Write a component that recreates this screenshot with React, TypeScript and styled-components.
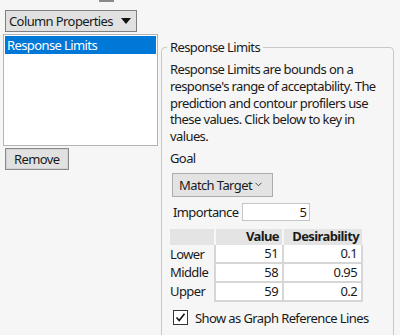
import React from "react";
import styled, { createGlobalStyle } from "styled-components";

const GlobalStyle = createGlobalStyle`
  html, body {
    margin: 0;
    padding: 0;
    background: #f6f6f6;
  }
  body {
    font-family: "Noto Sans", "Open Sans", sans-serif;
    font-size: 13px;
    letter-spacing: -0.6px;
    color: #1a1a1a;
  }
`;

const rows = [
  { label: "Lower", value: "51", desirability: "0.1" },
  { label: "Middle", value: "58", desirability: "0.95" },
  { label: "Upper", value: "59", desirability: "0.2" },
];

function App() {
  return (
    <>
      <GlobalStyle />
      <Page>
        <TopStub />
        <Main>
          <LeftColumn>
            <MenuButton>
              Column Properties
              <Caret />
            </MenuButton>
            <ListBox>
              <ListItem selected>Response Limits</ListItem>
            </ListBox>
            <PlainButton>Remove</PlainButton>
          </LeftColumn>

          <Group>
            <Legend>Response Limits</Legend>
            <Body>
              <Description>
                Response Limits are bounds on a<br />
                response's range of acceptability. The<br />
                prediction and contour profilers use<br />
                these values. Click below to key in<br />
                values.
              </Description>
              <Label>Goal</Label>
              <Select>
                Match Target
                <Chevron viewBox="0 0 8 5">
                  <path d="M0.5 0.5 L4 4 L7.5 0.5" fill="none" stroke="#333" strokeWidth="1" />
                </Chevron>
              </Select>
              <FieldRow>
                <span>Importance</span>
                <NumberBox>5</NumberBox>
              </FieldRow>
              <Table>
                <colgroup>
                  <col style={{ width: 45 }} />
                  <col style={{ width: 68 }} />
                  <col style={{ width: 79 }} />
                </colgroup>
                <thead>
                  <tr>
                    <Th />
                    <Th>Value</Th>
                    <Th>Desirability</Th>
                  </tr>
                </thead>
                <tbody>
                  {rows.map((r) => (
                    <tr key={r.label}>
                      <RowLabel>{r.label}</RowLabel>
                      <Cell>{r.value}</Cell>
                      <Cell>{r.desirability}</Cell>
                    </tr>
                  ))}
                </tbody>
              </Table>
              <CheckRow>
                <CheckBox viewBox="0 0 15 15">
                  <rect x="0.5" y="0.5" width="14" height="14" fill="#fff" stroke="#333" />
                  <path d="M3.5 7.5 L6.2 10.5 L11.5 3.8" fill="none" stroke="#111" strokeWidth="1.6" />
                </CheckBox>
                Show as Graph Reference Lines
              </CheckRow>
            </Body>
          </Group>
        </Main>
      </Page>
    </>
  );
}

const Page = styled.div`
  width: 400px;
  height: 335px;
  overflow: hidden;
`;

const TopStub = styled.div`
  width: 15px;
  height: 2px;
  margin-left: 99px;
  background: #8a8a8a;
`;

const Main = styled.div`
  display: flex;
  align-items: flex-start;
  padding-left: 3px;
`;

const LeftColumn = styled.div`
  display: flex;
  flex-direction: column;
  align-items: flex-start;
  width: 155px;
  padding-top: 8px;
`;

const MenuButton = styled.div`
  display: flex;
  align-items: center;
  gap: 8px;
  box-sizing: border-box;
  height: 22px;
  margin-left: 2px;
  padding: 0 5px 0 3px;
  background: #e1e1e1;
  border: 1px solid #7f7f7f;
  line-height: 20px;
  white-space: nowrap;
`;

const Caret = styled.span`
  width: 0;
  height: 0;
  border-left: 5px solid transparent;
  border-right: 5px solid transparent;
  border-top: 6px solid #111;
`;

const ListBox = styled.div`
  box-sizing: border-box;
  width: 155px;
  height: 112px;
  margin-top: 2px;
  padding: 1px;
  background: #fff;
  border: 1px solid #b4b4b4;
`;

const ListItem = styled.div<{ selected?: boolean }>`
  height: 18px;
  line-height: 18px;
  padding-left: 2px;
  background: ${({ selected }) => (selected ? "#0078d7" : "transparent")};
  color: ${({ selected }) => (selected ? "#fff" : "#1a1a1a")};
`;

const PlainButton = styled.div`
  box-sizing: border-box;
  height: 22px;
  margin: 2px 0 0 2px;
  padding: 0 8px;
  line-height: 20px;
  background: #e1e1e1;
  border: 1px solid #8a8a8a;
  box-shadow: inset 0 0 0 1px #d2d2d2;
`;

const Group = styled.fieldset`
  box-sizing: border-box;
  width: 233px;
  height: 320px;
  margin: 37px 0 0 3px;
  padding: 0 6px 0 5px;
  border: 1px solid #c9c9c9;
  border-radius: 4px;
  min-width: 0;
`;

const Legend = styled.legend`
  padding: 0 3px;
  line-height: 17px;
`;

const Body = styled.div`
  display: flex;
  flex-direction: column;
  align-items: flex-start;
  padding-left: 3px;
`;

const Description = styled.div`
  margin-top: 5px;
  line-height: 16.75px;
  white-space: nowrap;
`;

const Label = styled.div`
  margin-top: 5px;
  line-height: 17px;
`;

const Select = styled.div`
  display: flex;
  align-items: center;
  justify-content: space-between;
  box-sizing: border-box;
  width: 101px;
  height: 24px;
  margin: 6px 0 0 2px;
  padding: 0 10px 0 6px;
  background: #e3e3e3;
  border: 1px solid #adadad;
  white-space: nowrap;
`;

const Chevron = styled.svg`
  width: 7px;
  height: 5px;
  flex-shrink: 0;
`;

const FieldRow = styled.div`
  display: flex;
  align-items: center;
  gap: 4px;
  margin: 6px 0 0 3px;
  white-space: nowrap;
`;

const NumberBox = styled.div`
  box-sizing: border-box;
  width: 68px;
  height: 18px;
  padding-right: 3px;
  line-height: 16px;
  text-align: right;
  background: #fff;
  border: 1px solid #c6c6c6;
`;

const Table = styled.table`
  margin-top: 8px;
  border-collapse: collapse;
  table-layout: fixed;
  width: 192px;
`;

const Th = styled.th`
  height: 16px;
  padding: 0 3px;
  text-align: right;
  font-weight: bold;
  line-height: 15px;
  background: #e4e4e4;
  border-left: 2px solid #f6f6f6;
  white-space: nowrap;
  &:first-child {
    border-left: none;
  }
`;

const RowLabel = styled.td`
  height: 17px;
  padding: 0;
  line-height: 16px;
  text-align: left;
  border-right: 2px solid #d6d6d6;
`;

const Cell = styled.td`
  height: 17px;
  padding: 0 4px;
  line-height: 16px;
  text-align: right;
  background: #fff;
  border: 2px solid #d6d6d6;
  border-top: none;
`;

const CheckRow = styled.div`
  display: flex;
  align-items: center;
  gap: 7px;
  margin: 7px 0 0 3px;
  white-space: nowrap;
`;

const CheckBox = styled.svg`
  width: 15px;
  height: 15px;
  flex-shrink: 0;
`;

export default App;
